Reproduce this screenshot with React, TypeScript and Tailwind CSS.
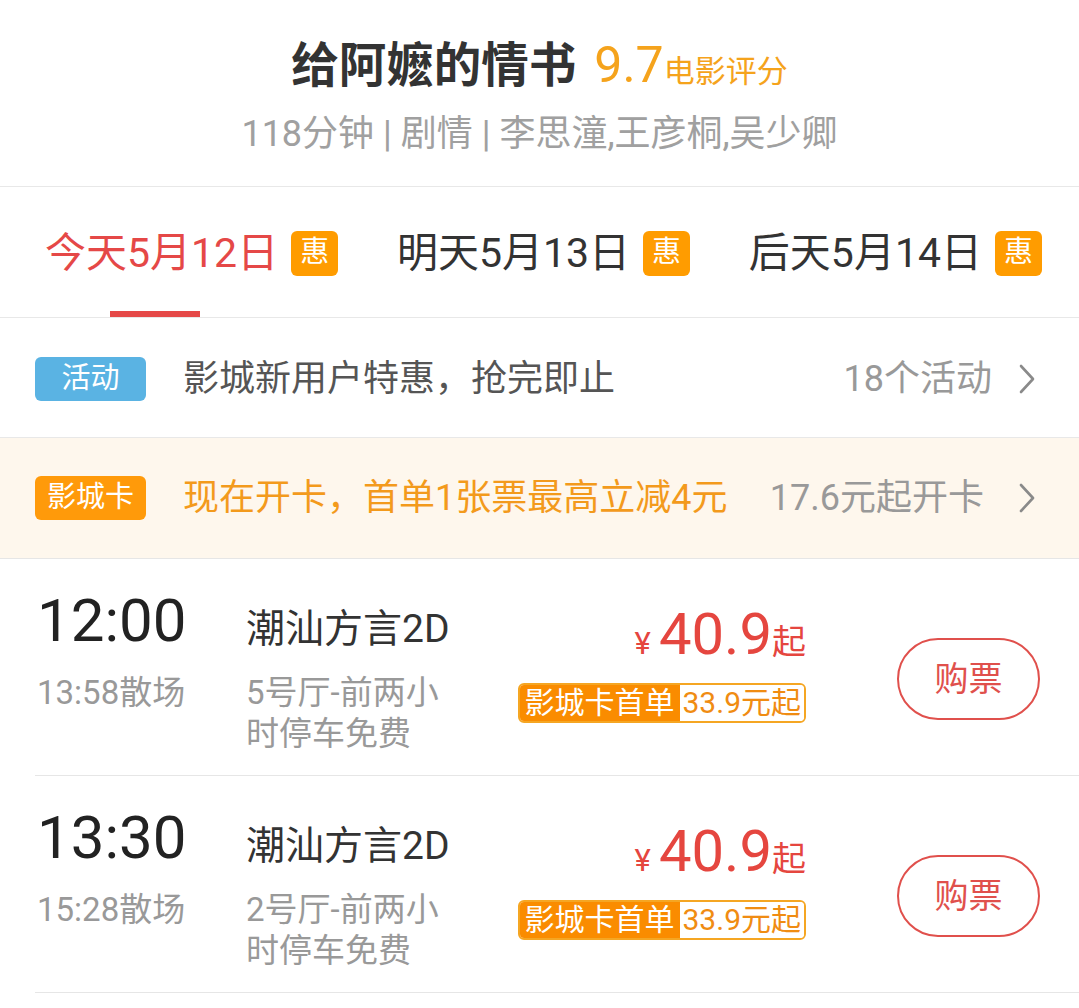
const font = "font-['Roboto','Noto_Sans_CJK_SC',sans-serif]";

function Chevron() {
  return (
    <svg width="18" height="32" viewBox="0 0 18 32" fill="none" className="shrink-0">
      <polyline points="3,3 15,16 3,29" stroke="#8a8a8a" strokeWidth="2.6" strokeLinecap="round" strokeLinejoin="round" />
    </svg>
  );
}

const tabs = [
  { label: '今天5月12日', active: true },
  { label: '明天5月13日', active: false },
  { label: '后天5月14日', active: false },
];

const shows = [
  { start: '12:00', end: '13:58散场', hall: ['5号厅-前两小', '时停车免费'] },
  { start: '13:30', end: '15:28散场', hall: ['2号厅-前两小', '时停车免费'] },
];

function ShowRow({ start, end, hall }: { start: string; end: string; hall: string[] }) {
  return (
    <div className="ml-[35px] flex h-[217px] items-start border-b border-[#e6e6e6] pr-[39px]">
      {/* time */}
      <div className="w-[211px] pl-[2px] pt-[32px]">
        <div className="text-[60px] leading-none text-[#222]">{start}</div>
        <div className="mt-[22px] text-[33px] leading-[40px] text-[#999]">{end}</div>
      </div>

      {/* movie */}
      <div className="flex-1 pt-[47px]">
        <div className="text-[39px] leading-[46px] text-[#333]">潮汕方言2D</div>
        <div className="mt-[20px] text-[33px] leading-[41px] text-[#999]">
          {hall.map((h) => (
            <div key={h}>{h}</div>
          ))}
        </div>
      </div>

      {/* price */}
      <div className="flex flex-col items-end pt-[46px]">
        <div className="flex items-baseline text-[#e5463f]">
          <span className="mr-[8px] text-[31px]">¥</span>
          <span className="text-[58px] leading-none">40.9</span>
          <span className="text-[34px] leading-none">起</span>
        </div>
        <div className="mt-[15px] flex h-[40px] overflow-hidden rounded-[6px] border-2 border-[#f5a623]">
          <span className="flex items-center bg-[#fa8c00] px-[5px] text-[30px] text-white">影城卡首单</span>
          <span className="flex items-center bg-white px-[3px] text-[30px] text-[#f08c12]">33.9元起</span>
        </div>
      </div>

      {/* buy */}
      <button className="ml-[91px] mt-[79px] flex h-[82px] w-[143px] items-center justify-center rounded-full border-2 border-[#e0504c] text-[34px] text-[#e0504c]">
        购票
      </button>
    </div>
  );
}

export default function App() {
  return (
    <div className={`${font} min-h-[1008px] w-[1079px] bg-white`}>
      {/* header */}
      <div className="flex h-[187px] flex-col items-center border-b border-[#e8e8e8] pt-[37px]">
        <div className="flex h-[56px] items-baseline">
          <span className="text-[47.5px] font-bold leading-[56px] text-[#333]">给阿嬷的情书</span>
          <span className="ml-[18px] text-[50px] leading-[56px] text-[#f5a31c]">9.7</span>
          <span className="text-[31px] text-[#f5a31c]">电影评分</span>
        </div>
        <div className="mt-[19px] text-[36px] leading-[44px] text-[#a0a0a0]">
          118分钟 | 剧情 | 李思潼,王彦桐,吴少卿
        </div>
      </div>

      {/* date tabs */}
      <div className="flex h-[131px] items-center justify-between border-b border-[#e8e8e8] pl-[45px] pr-[37px] pt-[2px]">
        {tabs.map((t) => (
          <div key={t.label} className="relative flex h-full items-center">
            <span className={`text-[41px] leading-none ${t.active ? 'text-[#e54847]' : 'text-[#333]'}`}>{t.label}</span>
            <span className="ml-[13px] flex h-[45px] w-[47px] items-center justify-center rounded-[6px] bg-[#ff9c00] text-[29px] text-white">
              惠
            </span>
            {t.active && <span className="absolute bottom-0 left-[65px] h-[6px] w-[90px] bg-[#e54847]" />}
          </div>
        ))}
      </div>

      {/* activity */}
      <div className="flex h-[120px] items-center border-b border-[#e8e8e8] pl-[35px] pr-[43px] pt-[3px]">
        <span className="flex h-[44px] w-[111px] items-center justify-center rounded-[6px] bg-[#5ab3e3] text-[29px] text-white">
          活动
        </span>
        <span className="ml-[37px] flex-1 text-[36px] text-[#555]">影城新用户特惠，抢完即止</span>
        <span className="mr-[26px] text-[36px] text-[#999]">18个活动</span>
        <Chevron />
      </div>

      {/* card */}
      <div className="flex h-[120px] items-center bg-[#fef7ed] pl-[35px] pr-[43px]">
        <span className="flex h-[44px] w-[111px] items-center justify-center rounded-[6px] bg-[#ff9a0a] text-[29px] text-white">
          影城卡
        </span>
        <span className="ml-[37px] flex-1 text-[36px] text-[#f39a1c]">现在开卡，首单1张票最高立减4元</span>
        <span className="mr-[34px] text-[36px] text-[#999]">17.6元起开卡</span>
        <Chevron />
      </div>

      <div className="border-t border-[#e6e6e6]">
        {shows.map((s) => (
          <ShowRow key={s.start} {...s} />
        ))}
      </div>
    </div>
  );
}
